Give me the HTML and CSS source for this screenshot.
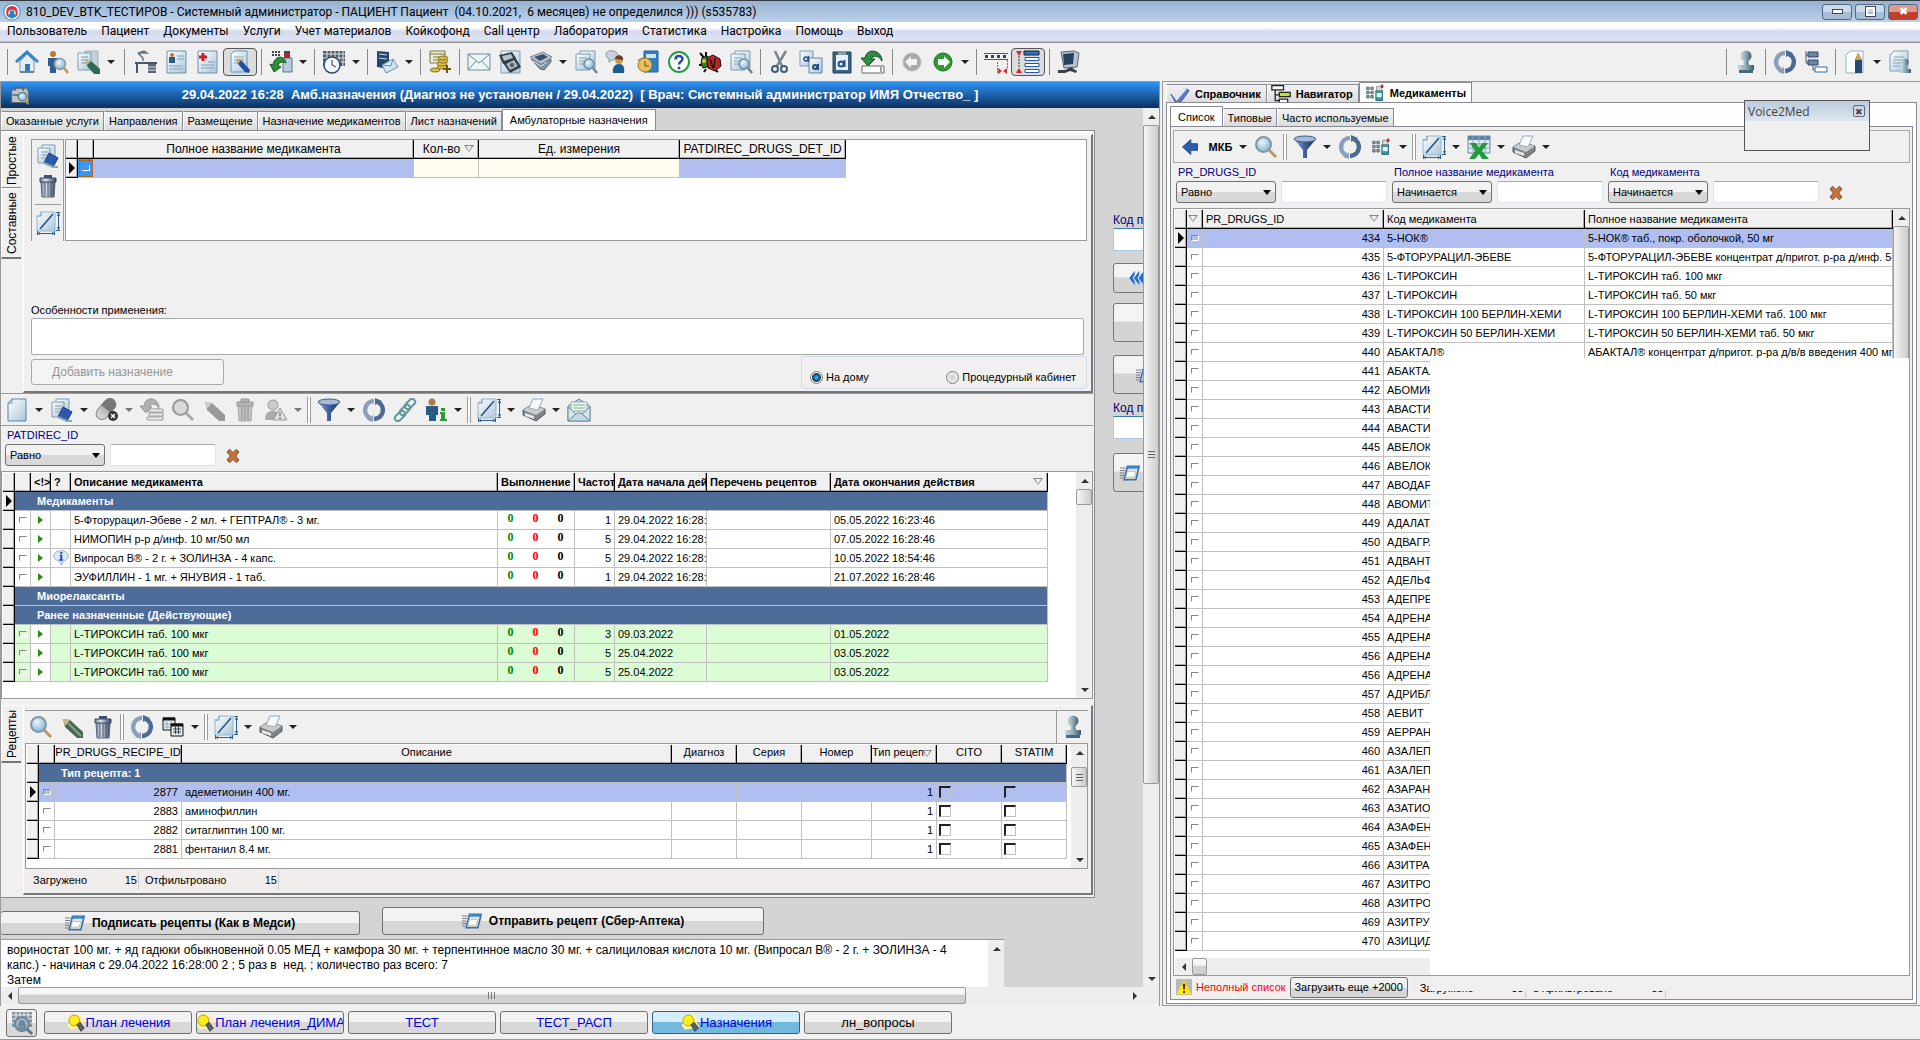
FILE: index.html
```html
<!DOCTYPE html>
<html lang="ru">
<head>
<meta charset="utf-8">
<title>810_DEV_BTK_ТЕСТИРОВ</title>
<link rel="stylesheet" href="styles.css">
</head>
<body>
<svg class="sprite" aria-hidden="true">
<defs>
<linearGradient id="gp" x1="0" y1="0" x2="1" y2="1"><stop offset="0" stop-color="#fff"/><stop offset="1" stop-color="#a9c6da"/></linearGradient>
<linearGradient id="gb" x1="0" y1="0" x2="1" y2="0"><stop offset="0" stop-color="#8fa9cf"/><stop offset=".5" stop-color="#3c5f9c"/><stop offset="1" stop-color="#1c2f5c"/></linearGradient>
<linearGradient id="gs" x1="0" y1="0" x2="1" y2="0"><stop offset="0" stop-color="#c9d8e0"/><stop offset=".5" stop-color="#8fa8b6"/><stop offset="1" stop-color="#3c5a6c"/></linearGradient>
<linearGradient id="gg" x1="0" y1="0" x2="1" y2="0"><stop offset="0" stop-color="#ddd"/><stop offset="1" stop-color="#8c8c8c"/></linearGradient>
<linearGradient id="gt" x1="0" y1="0" x2="1" y2="0"><stop offset="0" stop-color="#6d7a92"/><stop offset=".35" stop-color="#dfe5ee"/><stop offset="1" stop-color="#38455c"/></linearGradient>
<radialGradient id="gm" cx=".4" cy=".35" r=".7"><stop offset="0" stop-color="#eaf6fd"/><stop offset="1" stop-color="#7fb0d0"/></radialGradient>
<symbol id="page" viewBox="0 0 24 24"><path d="M7 1H21V23H3V5Z" fill="url(#gp)" stroke="#5d87a6"/><path d="M7 1V5H3Z" fill="#fff" stroke="#5d87a6"/></symbol>
<symbol id="home" viewBox="0 0 24 24"><path d="M5 11V22H19V11L12 4Z" fill="#e6eef5" stroke="#7d93a8"/><path d="M1 12L12 2L23 12" fill="none" stroke="#2f86c8" stroke-width="3"/><path d="M10 14h5v8h-5z" fill="#2f78b4"/><path d="M5 22h14" stroke="#6a7f92" stroke-width="2"/></symbol>
<symbol id="personmag" viewBox="0 0 24 24"><circle cx="7" cy="4" r="3" fill="#b87a3c"/><path d="M2 8h10v8h-2v7H4v-7H2z" fill="#2c5f90"/><circle cx="14" cy="14" r="5.500" fill="url(#gm)" stroke="#8b9aa6" stroke-width="1.500"/><path d="M18 18l4 5" stroke="#c8964a" stroke-width="2.500"/></symbol>
<symbol id="mag" viewBox="0 0 24 24"><circle cx="9.500" cy="9.500" r="7.500" fill="url(#gm)" stroke="#8197a5" stroke-width="2"/><path d="M15 15l7 7" stroke="#b99a62" stroke-width="3"/></symbol>
<symbol id="maggray" viewBox="0 0 24 24"><circle cx="9.500" cy="9.500" r="7.500" fill="#d8d8d8" stroke="#999" stroke-width="2"/><path d="M15 15l7 7" stroke="#aaa" stroke-width="3"/></symbol>
<symbol id="docpencil" viewBox="0 0 24 24"><path d="M8 1H21V17H8Z" fill="#c3d0d9" stroke="#9fb0bd"/><path d="M1 3H14V20H1Z" fill="url(#gp)" stroke="#7d9db3"/><path d="M4 7h7M4 10h7M4 13h6" stroke="#7d9db3"/><path d="M9 10l5 1 9 8v5h-6l-7-8z" fill="#2f6b52"/><path d="M9 10l5 1-4 4z" fill="#e2b98a"/></symbol>
<symbol id="notepencil" viewBox="0 0 24 24"><path d="M6 1H19V22H3V4Z" fill="url(#gp)" stroke="#5d9cc4"/><path d="M6 7h10M6 10h10M6 13h7" stroke="#8aa"/><path d="M9 9l4 1 9 10-1 3-4-1-7-8z" fill="#244e9a"/><path d="M9 9l4 1-3 4z" fill="#e0a35a"/></symbol>
<symbol id="desk" viewBox="0 0 24 24"><path d="M1 12h22v2H1zM2 14h2v9H2z" fill="#4a5563"/><path d="M14 14h8v9h-8z" fill="#5b6673"/><path d="M14 17h8M14 20h8" stroke="#dde"/><path d="M9 11V8L4 3M4 3l6-2 3 2z" stroke="#667684" stroke-width="1.500" fill="#cdd7de"/></symbol>
<symbol id="docperson" viewBox="0 0 24 24"><path d="M2 1H21V23H2Z" fill="url(#gp)" stroke="#6d93ab"/><circle cx="7" cy="5" r="2" fill="#b4783e"/><path d="M4 7h6v6H4z" fill="#2b5c8c"/><path d="M12 6h7M12 9h7M4 16h14M4 19h14" stroke="#86a2b5"/></symbol>
<symbol id="doccross" viewBox="0 0 24 24"><path d="M2 1H21V23H2Z" fill="url(#gp)" stroke="#6d93ab"/><path d="M7 3v8M3 7h8" stroke="#c8202c" stroke-width="3"/><path d="M12 12h7M5 15h14M5 18h14" stroke="#86a2b5"/></symbol>
<symbol id="flask" viewBox="0 0 24 24"><path d="M14 8h9v14h-9z" fill="#b9cbd6" stroke="#54788e"/><path d="M15 3h6v5h-6z" fill="#b52530"/><path d="M15 1h6v2h-6z" fill="#445"/><path d="M3 2h8M3 5h8" stroke="#445" stroke-width="2" stroke-dasharray="2 1"/><path d="M1 14l4 8 7-5-3-1c1-4 4-5 8-3-2-9-12-7-13 2z" fill="#2e8c3a" stroke="#175522"/></symbol>
<symbol id="clockcal" viewBox="0 0 24 24"><path d="M1 1h22v15H1z" fill="#515a68"/><path d="M1 4h22M1 8h22M1 12h22M5 1v15M9 1v15M13 1v15M17 1v15M21 1v15" stroke="#dfe5ea"/><circle cx="10" cy="15" r="8" fill="#f3f7fb" stroke="#2c4a70" stroke-width="1.500"/><path d="M10 10v5l4 2" fill="none" stroke="#333"/></symbol>
<symbol id="bookmail" viewBox="0 0 24 24"><path d="M2 1l12 1v17L2 17z" fill="#24466e"/><path d="M4 4l8 1M4 8l8 1" stroke="#cfe0ee"/><path d="M7 15l11-6 5 8-12 6z" fill="#d5e5ef" stroke="#6d93ab"/><path d="M7 15l9 1 2-7" fill="none" stroke="#6d93ab"/></symbol>
<symbol id="coins" viewBox="0 0 24 24"><path d="M2 1h15v12H2z" fill="#e8edda" stroke="#7e7a40"/><path d="M2 4h15M5 7h10M5 10h10" stroke="#7e7a40"/><g fill="#d7bd4a" stroke="#8b7422"><ellipse cx="14" cy="17" rx="5" ry="2"/><ellipse cx="14" cy="14" rx="5" ry="2"/><ellipse cx="15" cy="11" rx="5" ry="2"/><ellipse cx="15" cy="8" rx="5" ry="2"/><ellipse cx="7" cy="20" rx="5" ry="2"/></g><path d="M19 15v8M15 19h8" stroke="#6b5712" stroke-width="2"/></symbol>
<symbol id="mail" viewBox="0 0 24 24"><path d="M1 4H23V20H1Z" fill="#edf5f8" stroke="#6b8c9e"/><path d="M1 4l11 9 11-9M1 20l8-9M23 20l-8-9" fill="none" stroke="#6b8c9e"/></symbol>
<symbol id="photo" viewBox="0 0 24 24"><path d="M3 1h19v22H3z" fill="url(#gp)" stroke="#7d9db3"/><path d="M1 5l13-3 4 6-13 6z" fill="#343b44"/><path d="M4 6l9-2 2 4-9 3z" fill="#b8c4cc"/><path d="M5 13l12-6 6 10-11 6z" fill="#343b44"/><path d="M8 14l8-4 4 6-8 4z" fill="#a9b6c0"/><circle cx="14" cy="15" r="2" fill="#555"/></symbol>
<symbol id="scanner" viewBox="0 0 24 24"><path d="M1 7l13-5 9 5-11 7z" fill="#b8c6d0" stroke="#7c8c98"/><path d="M5 7l9-3 5 3-8 4z" fill="#3b556f"/><path d="M2 9l10 6 10-6v3l-7 8-4-1z" fill="#8394a1" stroke="#5b6974"/><path d="M4 11l8 5 6-4" fill="none" stroke="#dfe6ea"/></symbol>
<symbol id="docmag" viewBox="0 0 24 24"><path d="M6 1H21V18H6Z" fill="url(#gp)" stroke="#7d9db3"/><path d="M2 4H16V20H2Z" fill="url(#gp)" stroke="#7d9db3"/><path d="M5 8h8M5 11h6M5 14h5" stroke="#86a2b5"/><circle cx="15" cy="14" r="5" fill="url(#gm)" stroke="#6f8fa3" stroke-width="1.500"/><path d="M19 18l4 5" stroke="#6f8290" stroke-width="2.500"/></symbol>
<symbol id="speech" viewBox="0 0 24 24"><path d="M1 4c0-5 13-4 12 2 0 3-4 4-6 4l-3 2v-3C2 8 1 6 1 4z" fill="#c8d3db" stroke="#8497a5"/><circle cx="14" cy="10" r="4" fill="#d29a4b"/><path d="M10 9c0-5 9-5 8 1z" fill="#654321"/><path d="M8 23c-1-6 2-9 6-9s6 3 5 9z" fill="#1f5a8e"/></symbol>
<symbol id="docclock" viewBox="0 0 24 24"><path d="M8 1H22V22H8Z" fill="#2f7fc4" stroke="#245f95"/><path d="M10 4h10v4H10z" fill="#cfe3f2"/><path d="M1 10l7-3v5z" fill="#7a8a96"/><circle cx="9" cy="15" r="7" fill="#e9c05c" stroke="#9c7623"/><path d="M9 11v5h4" stroke="#6b4d10" fill="none"/></symbol>
<symbol id="help" viewBox="0 0 24 24"><circle cx="12" cy="12" r="10" fill="#fff" stroke="#2a9a4a" stroke-width="2"/><path d="M8.500 9.500c0-5 7-4.500 7-.5 0 2.500-3.500 2.500-3.500 5.500" fill="none" stroke="#2349b4" stroke-width="2.500"/><circle cx="12" cy="18" r="1.500" fill="#2349b4"/></symbol>
<symbol id="bug" viewBox="0 0 24 24"><path d="M2 3l5 6M8 2v6M1 15h5M8 19l-2 3M22 12l-4 2M17 20l3 2" stroke="#111" stroke-width="2"/><path d="M4 8l5-2 4 3-1 7-7 2-2-4z" fill="#2f7d31" stroke="#111"/><path d="M9 8l6-3 7 4 1 7-6 5-7-3z" fill="#c22323" stroke="#111"/><path d="M12 9l3 9M17 8l-1 10" stroke="#1b1b1b" stroke-width="1.500"/><circle cx="6" cy="11" r="2" fill="#e9c22d"/></symbol>
<symbol id="scissors" viewBox="0 0 24 24"><path d="M7 1l7 15M18 1L9 16" stroke="#7c858c" stroke-width="2.500"/><circle cx="7" cy="19" r="3" fill="#eef" stroke="#3f5d7c" stroke-width="2"/><circle cx="16" cy="19" r="3" fill="#eef" stroke="#3f5d7c" stroke-width="2"/></symbol>
<symbol id="copy" viewBox="0 0 24 24"><path d="M1 1h13v15H1z" fill="url(#gp)" stroke="#7d9db3"/><path d="M10 8h13v15H10z" fill="url(#gp)" stroke="#5e86a4"/><circle cx="7" cy="9" r="2" fill="none" stroke="#24508c" stroke-width="1.500"/><path d="M9.500 6v6" stroke="#24508c" stroke-width="1.500"/><circle cx="16" cy="17" r="2" fill="none" stroke="#24508c" stroke-width="2"/><path d="M19 14v6" stroke="#24508c" stroke-width="2"/></symbol>
<symbol id="clip" viewBox="0 0 24 24"><path d="M3 2h18v21H3z" fill="#3c6186" stroke="#27425f"/><path d="M6 5h12v15H6z" fill="#e6f0f6"/><path d="M8 1h8v4H8z" fill="#8d99a3"/><circle cx="11" cy="14" r="2.500" fill="none" stroke="#24508c" stroke-width="2"/><path d="M14.500 10v7" stroke="#24508c" stroke-width="2"/></symbol>
<symbol id="undo" viewBox="0 0 24 24"><path d="M0 8l7 8 7-7h-4c2-4 8-4 11 2 0-11-15-14-17-3z" fill="#2f8a46" stroke="#164d24"/><path d="M1 16h22v7H1z" fill="#fff" stroke="#666"/><path d="M20 17v5" stroke="#444"/></symbol>
<symbol id="back" viewBox="0 0 24 24"><circle cx="12" cy="12" r="9" fill="#aaa" stroke="#bbb"/><path d="M5 12l6-6v3h6v6h-6v3z" fill="#f2f2f2"/></symbol>
<symbol id="fwd" viewBox="0 0 24 24"><circle cx="12" cy="12" r="9" fill="#2c9c2f" stroke="#187020"/><path d="M19 12l-6-6v3H7v6h6v3z" fill="#fff"/></symbol>
<symbol id="ruler" viewBox="0 0 24 24"><path d="M0 3.500h24M0 9.500h24" stroke="#557"/><path d="M1 6.500h22" stroke="#345" stroke-width="3" stroke-dasharray="3 3"/><path d="M13.500 12v11M23.500 10v9" stroke="#777" stroke-dasharray="2 1"/><path d="M14 18l4 3-4 3zM23 18l-4 3 4 3z" fill="#c33"/></symbol>
<symbol id="lines" viewBox="0 0 24 24"><path d="M0 1h6L3 6zM0 23h6l-3-5z" fill="#d22"/><path d="M3 6v12" stroke="#333" stroke-dasharray="2 1"/><path d="M8 1h15v4H8z" fill="#2c74c8" stroke="#123"/><path d="M9 7.500h14v3H9zM9 13.500h14v3H9zM9 19.500h14v3H9z" fill="#fff" stroke="#2458a0"/></symbol>
<symbol id="monitor" viewBox="0 0 24 24"><path d="M4 2l13-1 5 2-2 14-13 1z" fill="#b9c3cb" stroke="#59636b"/><path d="M6 4l11-1-1 11-9 1z" fill="#24415f"/><path d="M1 20h7l6-3 6 4-1 2-6-2-5 2H1z" fill="#3b4248"/></symbol>
<symbol id="stamp" viewBox="0 0 24 24"><circle cx="12" cy="6" r="5.500" fill="url(#gs)"/><path d="M10 10h4l1 6H9z" fill="url(#gs)"/><path d="M4 15h16v5H4z" fill="url(#gs)"/><path d="M5 20h14v3H5z" fill="#4a6878"/></symbol>
<symbol id="refresh" viewBox="0 0 24 24"><path d="M12 3a9 9 0 0 0-4 17" fill="none" stroke="#8a9fba" stroke-width="4.500"/><path d="M12 21a9 9 0 0 0 4-17" fill="none" stroke="#4c6a92" stroke-width="4.500"/><path d="M11 17v7l-6-2z" fill="#8a9fba"/><path d="M13 7V0l7 3z" fill="#4c6a92"/></symbol>
<symbol id="tree" viewBox="0 0 24 24"><path d="M2 1v12h7v7h5M2 5h3" fill="none" stroke="#456"/><path d="M4 2h10v5H4zM4 10h10v5H4z" fill="#6e85a8" stroke="#34496b"/><path d="M11 17h12v5H11z" fill="#fff" stroke="#2b6ca8"/></symbol>
<symbol id="docpen" viewBox="0 0 24 24"><path d="M7 1H20V23H3V5Z" fill="#fff" stroke="#8fb3cc"/><path d="M12 10l3-7 4 7v13h-7z" fill="#264a72"/><path d="M12 10l3-7 4 7z" fill="#d8a23e"/></symbol>
<symbol id="docstamp" viewBox="0 0 24 24"><path d="M6 1H20V21H2V5Z" fill="url(#gp)" stroke="#7d9db3"/><path d="M6 7h10M5 10h10M5 13h8M5 16h8" stroke="#8aa6b6"/><circle cx="17" cy="12" r="3.500" fill="url(#gs)"/><path d="M15 15h4v4h4v4H12v-4h3z" fill="url(#gs)"/></symbol>
<symbol id="book" viewBox="0 0 24 24"><path d="M6 1H19V17H6Z" fill="url(#gp)" stroke="#7d9db3"/><path d="M2 4H14V19H2Z" fill="url(#gp)" stroke="#7d9db3"/><path d="M5 8h7M5 11h7M5 14h5" stroke="#86a2b5"/><path d="M13 9l9 5-5 9-9-4z" fill="#2d58b0" stroke="#1c3a7c"/><path d="M8 19l9 4h5" fill="none" stroke="#8aa" stroke-width="2"/></symbol>
<symbol id="trash" viewBox="0 0 24 24"><path d="M5 8h14l-1 15H6z" fill="url(#gt)" stroke="#56637a"/><path d="M9 9v13M12 9v13M15 9v13" stroke="#4b5870"/><path d="M4 4h16v4H4z" fill="url(#gt)" stroke="#3a4864"/><path d="M8 1h8v3H8z" fill="#3e4f70"/></symbol>
<symbol id="trashgray" viewBox="0 0 24 24"><path d="M5 8h14l-1 15H6z" fill="#c4c4c4" stroke="#aaa"/><path d="M9 9v13M12 9v13M15 9v13" stroke="#8f8f8f"/><path d="M4 4h16v4H4zM8 1h8v3H8z" fill="#b5b5b5" stroke="#999"/></symbol>
<symbol id="measure" viewBox="0 0 24 24"><path d="M5 1H19V20H1V5Z" fill="url(#gp)" stroke="#8fb8d2"/><path d="M1 5h4V1" fill="#fff" stroke="#5d87a6"/><path d="M4 18L17 3" stroke="#24507f" stroke-width="1.500"/><path d="M22.500 2v17M2 22.500h16M20 1.500h4M20 19.500h4M1.500 20v4M18.500 20v4" stroke="#2d5f94"/><path d="M22.500 1l-1.500 4h3zM22.500 20l-1.500-4h3zM1 22.500l3-1.500v3zM19 22.500l-3-1.500v3z" fill="#2d5f94"/></symbol>
<symbol id="pill" viewBox="0 0 24 24"><g transform="rotate(-50 11 11)"><rect x="-1" y="5" width="24" height="12" rx="6" fill="url(#gg)" stroke="#888"/><path d="M11 5h6a6 6 0 0 1 0 12h-6z" fill="#777"/></g><circle cx="18" cy="18" r="5" fill="#333"/><path d="M16 16l4 4M20 16l-4 4" stroke="#fff" stroke-width="1.500"/></symbol>
<symbol id="undolist" viewBox="0 0 24 24"><path d="M0 8l6 7 6-6H9c2-4 8-4 10 2C20-1 5-3 4 8z" fill="#b0b0b0" stroke="#999"/><path d="M9 11h14v3H9zM9 15h14v3H9zM7 19h16v3H7z" fill="#eee" stroke="#999"/></symbol>
<symbol id="pencilgray" viewBox="0 0 24 24"><path d="M3 4l7 1 13 12v6h-6L5 12z" fill="#999"/><path d="M3 4l7 1-5 6z" fill="#ccc"/></symbol>
<symbol id="pencil" viewBox="0 0 24 24"><path d="M3 4l7 1 13 12v6h-6L5 12z" fill="#466a50"/><path d="M8 8l13 13" stroke="#85a58c" stroke-width="2"/><path d="M3 4l7 1-5 6z" fill="#d9b48a"/></symbol>
<symbol id="persongray" viewBox="0 0 24 24"><circle cx="9" cy="7" r="5" fill="#ccc" stroke="#999"/><path d="M1 22c0-7 3-9 8-9s8 2 8 9z" fill="#aaa"/><path d="M16 10l7 12H9z" fill="#ddd" stroke="#999"/><path d="M16 14v4M16 19v2" stroke="#888" stroke-width="1.500"/></symbol>
<symbol id="funnel" viewBox="0 0 24 24"><path d="M1 4l9 11v8h4v-8L23 4z" fill="url(#gb)"/><ellipse cx="12" cy="4" rx="11" ry="3" fill="#a6bbd9" stroke="#3d5b8f"/></symbol>
<symbol id="chain" viewBox="0 0 24 24"><g fill="none" stroke="#5f9a9c" stroke-width="2"><rect x="11" y="3" width="12" height="6" rx="3" transform="rotate(-45 17 6)"/><rect x="6" y="9" width="12" height="6" rx="3" transform="rotate(-45 12 12)"/><rect x="1" y="15" width="12" height="6" rx="3" transform="rotate(-45 7 18)"/></g></symbol>
<symbol id="maninfo" viewBox="0 0 24 24"><circle cx="8" cy="4" r="3.500" fill="#b07a46"/><path d="M2 8h12v9h-2v6H5v-6H2z" fill="#265a88"/><path d="M17 10h4v3h-4zM16 14h5v7h2v2h-7v-2h1v-5h-1z" fill="#2d9a33"/></symbol>
<symbol id="printer" viewBox="0 0 24 24"><path d="M1 12l8-5 14 4v5l-9 7L1 17z" fill="#7f8488" stroke="#55595c"/><path d="M1 12l8-5 14 4-9 6z" fill="#c7cbce"/><path d="M7 10l4-9h10l-5 11z" fill="#f6f9fb" stroke="#9ab"/><path d="M3 15l9 3v3l-9-3z" fill="#e5e7e8"/></symbol>
<symbol id="openmail" viewBox="0 0 24 24"><path d="M1 8l11-7 11 7v15H1z" fill="#b4d0da" stroke="#6b8c9e"/><path d="M4 4h16v12H4z" fill="#f1f8ec" stroke="#9ab"/><path d="M6 7h12M6 10h12M6 13h12" stroke="#7a9"/><path d="M1 9l8 7-8 7zM23 9l-8 7 8 7z" fill="#d4e5ec" stroke="#6b8c9e"/><path d="M1 23l9-8h4l9 8z" fill="#c3dae3" stroke="#6b8c9e"/></symbol>
<symbol id="grids" viewBox="0 0 24 24"><path d="M2 3h12v12H2z" fill="#e3efe6" stroke="#111"/><path d="M2 4h12" stroke="#111" stroke-width="3"/><path d="M2 9h12M2 12h12M6 5v10M10 5v10" stroke="#9ab"/><path d="M10 9h12v12H10z" fill="#e3efe6" stroke="#111"/><path d="M10 10h12" stroke="#111" stroke-width="3"/><path d="M12 14h8M12 17h8M14.500 12v7M17.500 12v7" stroke="#345"/></symbol>
<symbol id="arrow" viewBox="0 0 24 24"><path d="M3 12l10-9v5h8v8h-8v5z" fill="#2f5dae" stroke="#1b3f80"/></symbol>
<symbol id="drugs" viewBox="0 0 24 24"><path d="M2 5h3v3H2zM7 5h3v3H7zM2 10h3v3H2zM7 10h3v3H7zM2 15h3v3H2zM7 15h3v3H7z" fill="#8ea0ac" stroke="#56656f"/><path d="M13 9h8v12h-8z" fill="#2d9ca6" stroke="#1c6169"/><path d="M14 12h6v5h-6z" fill="#e8f4f5"/><path d="M14 4h6v5h-6z" fill="#d9dfe2" stroke="#788"/><path d="M19 2h3v4h-3z" fill="#c22"/></symbol>
<symbol id="excel" viewBox="0 0 24 24"><path d="M1 1h22v17H1z" fill="#dfe9ee" stroke="#6a8ba0"/><path d="M1 1h22v4H1z" fill="#5c84a8"/><path d="M1 9h22M1 13h22M6 1v17M12 1v17M18 1v17" stroke="#8aa6b6"/><path d="M3 8h6l3 5 3-5h6l-6 8 7 8h-7l-3-5-4 5H2l6-8z" fill="#219a3c"/></symbol>
<symbol id="cross" viewBox="0 0 24 24"><path d="M3 6l4-4 5 5 5-5 4 4-5 6 5 6-4 4-5-5-5 5-4-4 5-6z" fill="#c8733c" stroke="#7e4a2c" stroke-width="1.500"/></symbol>
<symbol id="bulb" viewBox="0 0 24 24"><path d="M11 0l2 4 5-3 1 5 4 2-3 4 3 4-5 2-12 2-4-5 2-4-3-4 6-1 1-4z" fill="#fbf3a8"/><circle cx="10" cy="9" r="6.500" fill="#ffee1c" stroke="#b58a10"/><path d="M13 14l4-3 5 7-4 4z" fill="#56606e" stroke="#333"/></symbol>
<symbol id="win" viewBox="0 0 24 24"><path d="M9 4h14l-4 16H5z" fill="#f4e9cf" stroke="#3b6fae" stroke-width="2"/><path d="M9 4h14l-1 3H8z" fill="#3a86d8"/><path d="M9 10h10l-2 7H7z" fill="#fff" stroke="#a9b4bf"/><path d="M0 6h7M0 9h6M0 12h5M0 15h5M0 18h4" stroke="#667"/></symbol>
<symbol id="case" viewBox="0 0 24 24"><path d="M2 7l4-3h14l2 3v14H2z" fill="#b9c4ca" stroke="#56656f"/><path d="M6 7V3h10v4M3 12h8" fill="none" stroke="#56656f" stroke-width="2"/><circle cx="15" cy="14" r="5" fill="url(#gm)" stroke="#5b7386" stroke-width="1.500"/><path d="M18 18l4 5" stroke="#c69040" stroke-width="2.500"/></symbol>
<symbol id="logo" viewBox="0 0 24 24"><circle cx="12" cy="12" r="11" fill="#fff" stroke="#6aa3cf" stroke-width="2"/><path d="M5 17C3 9 6 4 12 4s9 5 7 13l-3 1c2-6 1-9-4-9s-6 3-4 9z" fill="#d8323c"/><path d="M9 10h6v4l3 4-6 3-6-3 3-4z" fill="#2f80be"/></symbol>
<symbol id="check" viewBox="0 0 24 24"><path d="M1 12l7 7L19 5l4 3-11 15H7z" fill="#5d78c4" stroke="#344d90"/><path d="M1 11l6 5 8-11h6L8 20z" fill="#e3e9f8"/></symbol>
<symbol id="nav" viewBox="0 0 24 24"><path d="M1 2h14v5H1z" fill="#fff" stroke="#222" stroke-width="1.500"/><path d="M5 7v13h5M5 13h5" fill="none" stroke="#222" stroke-width="1.500"/><path d="M10 10h13v5H10z" fill="#b4e62e" stroke="#222" stroke-width="1.500"/><path d="M10 18h10v5H10z" fill="#fff" stroke="#222" stroke-width="1.500"/></symbol>
<symbol id="info" viewBox="0 0 24 24"><path d="M12 1c7 0 11 4 11 8s-3 7-8 8l-2 6-3-6c-5-1-9-4-9-8s4-8 11-8z" fill="#dbe8f5" stroke="#6f95bd"/><path d="M11 3h3v3h-3zM10 7h4v7h1v2h-6v-2h2V9h-1z" fill="#1f4fae"/></symbol>
<symbol id="warn" viewBox="0 0 24 24"><path d="M0 0h24v24H0z" fill="#b9b9b9"/><path d="M12 1l11 22H1z" fill="#ffee00"/><path d="M10 7h4l-1 9h-2zM10.500 18h3v3h-3z" fill="#7b1010"/></symbol>
<symbol id="rewind" viewBox="0 0 24 24"><path d="M10 1L2 12l8 11V17l-3-5 3-5zM17 1L9 12l8 11V17l-3-5 3-5zM24 1l-8 11 8 11z" fill="#1f6fd6"/></symbol>
<symbol id="sheetmag" viewBox="0 0 24 24"><path d="M2 1h20v15H2z" fill="#8793a0"/><path d="M2 4h20M2 8h20M2 12h20M6 1v15M10 1v15M14 1v15M18 1v15" stroke="#e8ecef"/><circle cx="12" cy="13" r="7" fill="#9fb2c2" stroke="#6f8596" stroke-width="2"/><path d="M9 13h6v5H9zM10 13v-3h4v3" fill="#7890a3" stroke="#667e92"/><path d="M17 18l5 5" stroke="#667684" stroke-width="3"/></symbol>
</defs>
</svg>

<header class="title">
<svg class="ic s16"><use href="#logo"/></svg>
<span>810_DEV_BTK_ТЕСТИРОВ - Системный администратор - ПАЦИЕНТ Пациент&nbsp; (04.10.2021,&nbsp; 6 месяцев) не определился ))) (s535783)</span>
<div class="winbtns"><button aria-label="Свернуть"><i class="min"></i></button><button aria-label="Восстановить"><i class="max"></i></button><button class="close" aria-label="Закрыть">✖</button></div>
</header>
<nav class="menu"><a href="#">Пользователь</a><a href="#">Пациент</a><a href="#">Документы</a><a href="#">Услуги</a><a href="#">Учет материалов</a><a href="#">Койкофонд</a><a href="#">Call центр</a><a href="#">Лаборатория</a><a href="#">Статистика</a><a href="#">Настройка</a><a href="#">Помощь</a><a href="#">Выход</a></nav>

<div class="bar main-bar">
<i class="sep"></i>
<button aria-label="Домой"><svg class="ic"><use href="#home"/></svg></button>
<button aria-label="Поиск пациента"><svg class="ic"><use href="#personmag"/></svg></button>
<button aria-label="Запись"><svg class="ic"><use href="#docpencil"/></svg></button><b class="car"></b>
<i class="sep wide"></i>
<button aria-label="Рабочий стол"><svg class="ic"><use href="#desk"/></svg></button>
<button aria-label="Карта"><svg class="ic"><use href="#docperson"/></svg></button>
<button aria-label="Медкарта"><svg class="ic"><use href="#doccross"/></svg></button>
<button class="on" aria-label="Редактор"><svg class="ic"><use href="#notepencil"/></svg></button>
<i class="sep"></i>
<button aria-label="Препараты"><svg class="ic"><use href="#flask"/></svg></button><b class="car"></b>
<i class="sep"></i>
<button aria-label="Расписание"><svg class="ic"><use href="#clockcal"/></svg></button><b class="car"></b>
<i class="sep"></i>
<button aria-label="Направления"><svg class="ic"><use href="#bookmail"/></svg></button><b class="car"></b>
<i class="sep"></i>
<button aria-label="Оплата"><svg class="ic"><use href="#coins"/></svg></button>
<i class="sep"></i>
<button aria-label="Почта"><svg class="ic"><use href="#mail"/></svg></button>
<button aria-label="Снимки"><svg class="ic"><use href="#photo"/></svg></button>
<button aria-label="Сканер"><svg class="ic"><use href="#scanner"/></svg></button><b class="car"></b>
<button aria-label="Просмотр"><svg class="ic"><use href="#docmag"/></svg></button>
<button aria-label="Сообщения"><svg class="ic"><use href="#speech"/></svg></button>
<button aria-label="Журнал"><svg class="ic"><use href="#docclock"/></svg></button>
<button aria-label="Справка"><svg class="ic"><use href="#help"/></svg></button>
<button aria-label="Отладка"><svg class="ic"><use href="#bug"/></svg></button>
<button aria-label="Поиск"><svg class="ic"><use href="#docmag"/></svg></button>
<i class="sep"></i>
<button aria-label="Вырезать"><svg class="ic"><use href="#scissors"/></svg></button>
<button aria-label="Копировать"><svg class="ic"><use href="#copy"/></svg></button>
<button aria-label="Вставить"><svg class="ic"><use href="#clip"/></svg></button>
<button aria-label="Отменить"><svg class="ic"><use href="#undo"/></svg></button>
<i class="sep"></i>
<button aria-label="Назад"><svg class="ic"><use href="#back"/></svg></button>
<button aria-label="Вперёд"><svg class="ic"><use href="#fwd"/></svg></button><b class="car"></b>
<i class="sep"></i>
<button aria-label="Ширина"><svg class="ic"><use href="#ruler"/></svg></button>
<button class="on" aria-label="Высота"><svg class="ic"><use href="#lines"/></svg></button>
<i class="sep"></i>
<button aria-label="Система"><svg class="ic"><use href="#monitor"/></svg></button>
<span class="grow"></span>
<i class="sep"></i>
<button aria-label="Подпись"><svg class="ic"><use href="#stamp"/></svg></button>
<i class="sep"></i>
<button aria-label="Обновить"><svg class="ic"><use href="#refresh"/></svg></button>
<button aria-label="Дерево"><svg class="ic"><use href="#tree"/></svg></button>
<i class="sep"></i>
<button aria-label="Правка"><svg class="ic"><use href="#docpen"/></svg></button><b class="car"></b>
<button aria-label="Печать"><svg class="ic"><use href="#docstamp"/></svg></button>
</div>

<main class="work">
<section class="left">
<h1 class="cap"><svg class="ic s20"><use href="#case"/></svg><span>29.04.2022 16:28&nbsp; Амб.назначения (Диагноз не установлен / 29.04.2022)&nbsp; [ Врач: Системный администратор ИМЯ Отчество_ ]</span></h1>
<div class="scroll">
<div class="view">
<div class="tabs ltabs"><button>Оказанные услуги</button><button>Направления</button><button>Размещение</button><button>Назначение медикаментов</button><button>Лист назначений</button><button class="act">Амбулаторные назначения</button></div>
<div class="cols">
<div class="page">

<div class="vgroup g1">
<div class="vtabs"><button class="vt a">Простые</button><button class="vt b">Составные</button></div>
<div class="vpanel">
<div class="drugs">
<div class="vbar"><button aria-label="Справочник"><svg class="ic"><use href="#book"/></svg></button><button aria-label="Удалить"><svg class="ic"><use href="#trash"/></svg></button><hr><button aria-label="Размер"><svg class="ic"><use href="#measure"/></svg></button></div>
<div class="gridbox">
<table class="grid t1"><colgroup><col class="w12"><col class="w16"><col class="w320"><col class="w65"><col class="w201"><col class="w166"></colgroup>
<tr><th><th><th>Полное название медикамента<th class="sort">Кол-во<i class="flt"></i><th>Ед. измерения<th>PATDIREC_DRUGS_DET_ID
<tr><td class="ind cur"><td class="foc"><input type="checkbox" class="mk" aria-label="Строка"><td class="sel"><td class="crm"><td class="crm"><td class="sel">
</table></div>
</div>
<label class="lab" for="osob">Особенности применения:</label>
<textarea id="osob" class="memo"></textarea>
<div class="addrow"><button class="add" disabled>Добавить назначение</button>
<fieldset><label><input type="radio" name="place" checked>На дому</label><label><input type="radio" name="place">Процедурный кабинет</label></fieldset></div>
</div>
</div>

<div class="bar bx">
<button aria-label="Новый"><svg class="ic"><use href="#page"/></svg></button><b class="car"></b>
<button aria-label="Справочник"><svg class="ic"><use href="#book"/></svg></button><b class="car"></b>
<button aria-label="Отменить препарат"><svg class="ic"><use href="#pill"/></svg></button><b class="car off"></b>
<button aria-label="Вернуть"><svg class="ic"><use href="#undolist"/></svg></button>
<button aria-label="Просмотр"><svg class="ic"><use href="#maggray"/></svg></button>
<button aria-label="Изменить"><svg class="ic"><use href="#pencilgray"/></svg></button>
<button aria-label="Удалить"><svg class="ic"><use href="#trashgray"/></svg></button>
<button aria-label="Пациент"><svg class="ic"><use href="#persongray"/></svg></button><b class="car off"></b>
<i class="dsep"></i>
<button aria-label="Фильтр"><svg class="ic"><use href="#funnel"/></svg></button><b class="car"></b>
<button aria-label="Обновить"><svg class="ic"><use href="#refresh"/></svg></button>
<button aria-label="Связь"><svg class="ic"><use href="#chain"/></svg></button>
<button aria-label="Сведения"><svg class="ic"><use href="#maninfo"/></svg></button><b class="car"></b>
<i class="dsep"></i>
<button aria-label="Размер"><svg class="ic"><use href="#measure"/></svg></button><b class="car"></b>
<button aria-label="Печать"><svg class="ic"><use href="#printer"/></svg></button><b class="car"></b>
<button aria-label="Письмо"><svg class="ic"><use href="#openmail"/></svg></button>
</div>

<div class="filter">
<div class="fc"><label for="f0">PATDIREC_ID</label><div><select id="f0"><option>Равно</select><input type="text" aria-label="PATDIREC_ID значение"></div></div>
<button class="clr" aria-label="Очистить"><svg class="ic s16"><use href="#cross"/></svg></button>
</div>

<div class="gridbox g2">
<div class="gcell">
<table class="grid t2"><colgroup><col class="w12"><col class="w16"><col class="w20"><col class="w20"><col class="w427"><col class="w77"><col class="w40"><col class="w92"><col class="w124"><col class="w217"></colgroup>
<tr><th><th><th>&lt;!&gt;<th>?<th>Описание медикамента<th>Выполнение<th>Частота<th>Дата начала действия<th>Перечень рецептов<th>Дата окончания действия<i class="flt"></i>
<tr><td class="ind cur"><td class="grp" colspan="9">Медикаменты
<tr><td class="ind"><td><input type="checkbox" class="mk" aria-label="Строка"><td class="pl"><i></i><td><td>5-Фторурацил-Эбеве - 2 мл. + ГЕПТРАЛ® - 3 мг.<td class="cnt"><b>0</b><b>0</b><b>0</b><td class="r">1<td>29.04.2022 16:28:46<td><td>05.05.2022 16:23:46
<tr><td class="ind"><td><input type="checkbox" class="mk" aria-label="Строка"><td class="pl"><i></i><td><td>НИМОПИН р-р д/инф. 10 мг/50 мл<td class="cnt"><b>0</b><b>0</b><b>0</b><td class="r">5<td>29.04.2022 16:28:46<td><td>07.05.2022 16:28:46
<tr><td class="ind"><td><input type="checkbox" class="mk" aria-label="Строка"><td class="pl"><i></i><td class="inf"><svg class="ic s16"><use href="#info"/></svg><td>Випросал В® - 2 г. + ЗОЛИНЗА - 4 капс.<td class="cnt"><b>0</b><b>0</b><b>0</b><td class="r">5<td>29.04.2022 16:28:46<td><td>10.05.2022 18:54:46
<tr><td class="ind"><td><input type="checkbox" class="mk" aria-label="Строка"><td class="pl"><i></i><td><td>ЭУФИЛЛИН - 1 мг. + ЯНУВИЯ - 1 таб.<td class="cnt"><b>0</b><b>0</b><b>0</b><td class="r">1<td>29.04.2022 16:28:46<td><td>21.07.2022 16:28:46
<tr><td class="ind"><td class="grp" colspan="9">Миорелаксанты
<tr><td class="ind"><td class="grp" colspan="9">Ранее назначенные (Действующие)
<tr class="grn"><td class="ind"><td><input type="checkbox" class="mk" aria-label="Строка"><td class="pl"><i></i><td><td>L-ТИРОКСИН таб. 100 мкг<td class="cnt"><b>0</b><b>0</b><b>0</b><td class="r">3<td>09.03.2022<td><td>01.05.2022
<tr class="grn"><td class="ind"><td><input type="checkbox" class="mk" aria-label="Строка"><td class="pl"><i></i><td><td>L-ТИРОКСИН таб. 100 мкг<td class="cnt"><b>0</b><b>0</b><b>0</b><td class="r">5<td>25.04.2022<td><td>03.05.2022
<tr class="grn"><td class="ind"><td><input type="checkbox" class="mk" aria-label="Строка"><td class="pl"><i></i><td><td>L-ТИРОКСИН таб. 100 мкг<td class="cnt"><b>0</b><b>0</b><b>0</b><td class="r">5<td>25.04.2022<td><td>03.05.2022
</table></div>
<div class="vsb"><i class="up"></i><i class="th t16"></i><i class="rest"></i><i class="dn"></i></div>
</div>

<div class="vgroup g3">
<div class="vtabs"><button class="vt c">Рецепты</button></div>
<div class="vpanel">
<div class="bar rbar">
<button aria-label="Просмотр"><svg class="ic"><use href="#mag"/></svg></button>
<button aria-label="Изменить"><svg class="ic"><use href="#pencil"/></svg></button>
<button aria-label="Удалить"><svg class="ic"><use href="#trash"/></svg></button>
<i class="dsep"></i>
<button aria-label="Обновить"><svg class="ic"><use href="#refresh"/></svg></button>
<button aria-label="Таблицы"><svg class="ic"><use href="#grids"/></svg></button><b class="car"></b>
<i class="dsep"></i>
<button aria-label="Размер"><svg class="ic"><use href="#measure"/></svg></button><b class="car"></b>
<button aria-label="Печать"><svg class="ic"><use href="#printer"/></svg></button><b class="car"></b>
<span class="grow"></span>
<button class="stampb" aria-label="Подпись"><svg class="ic"><use href="#stamp"/></svg></button>
</div>
<div class="gridbox g4">
<div class="gcell">
<table class="grid t3"><colgroup><col class="w12"><col class="w16"><col class="w127"><col class="w490"><col class="w65"><col class="w65"><col class="w69"><col class="w65"><col class="w65"><col class="w65"></colgroup>
<tr><th><th><th>PR_DRUGS_RECIPE_ID<th>Описание<th>Диагноз<th>Серия<th>Номер<th class="l"><span>Тип рецепта</span><i class="flt"></i><th>CITO<th>STATIM
<tr><td class="ind"><td class="grp" colspan="9">Тип рецепта: 1
<tr class="selrow"><td class="ind cur"><td><input type="checkbox" class="mk" aria-label="Строка"><td class="r">2877<td>адеметионин 400 мг.<td><td><td><td class="r">1<td><input type="checkbox" class="cb" aria-label="CITO"><td><input type="checkbox" class="cb" aria-label="STATIM">
<tr><td class="ind"><td><input type="checkbox" class="mk" aria-label="Строка"><td class="r">2883<td>аминофиллин<td><td><td><td class="r">1<td><input type="checkbox" class="cb" aria-label="CITO"><td><input type="checkbox" class="cb" aria-label="STATIM">
<tr><td class="ind"><td><input type="checkbox" class="mk" aria-label="Строка"><td class="r">2882<td>ситаглиптин 100 мг.<td><td><td><td class="r">1<td><input type="checkbox" class="cb" aria-label="CITO"><td><input type="checkbox" class="cb" aria-label="STATIM">
<tr><td class="ind"><td><input type="checkbox" class="mk" aria-label="Строка"><td class="r">2881<td>фентанил 8.4 мг.<td><td><td><td class="r">1<td><input type="checkbox" class="cb" aria-label="CITO"><td><input type="checkbox" class="cb" aria-label="STATIM">
</table></div>
<div class="vsb"><i class="up"></i><i class="gap6"></i><i class="th t20 grip"></i><i class="rest"></i><i class="dn"></i></div>
</div>
<div class="status"><span><em>Загружено</em><em>15</em></span><span><em>Отфильтровано</em><em>15</em></span></div>
</div>
</div>
</div>
<aside class="side">
<label for="k1">Код пациента</label><input id="k1" type="text">
<button class="x1" aria-label="Назад"><svg class="ic s16"><use href="#rewind"/></svg></button>
<button class="x2" aria-label="Действие"></button>
<button class="x3" aria-label="Форма"><svg class="ic s20"><use href="#win"/></svg></button>
<label for="k2">Код пациента</label><input id="k2" type="text">
<button class="x4" aria-label="Окно"><svg class="ic s20"><use href="#win"/></svg></button>
</aside>
</div>
<div class="acts"><button class="b1"><svg class="ic s20"><use href="#win"/></svg>Подписать рецепты (Как в Медси)</button><button class="b2"><svg class="ic s20"><use href="#win"/></svg>Отправить рецепт (Сбер-Аптека)</button></div>
<div class="note"><p>вориностат 100 мг. + яд гадюки обыкновенной 0.05 МЕД + камфора 30 мг. + терпентинное масло 30 мг. + салициловая кислота 10 мг. (Випросал В® - 2 г. + ЗОЛИНЗА - 4 капс.) - начиная с 29.04.2022 16:28:00 2 ; 5 раз в&nbsp; нед. ; количество раз всего: 7<br>Затем</p><div class="vsb"><i class="up"></i></div></div>
</div>
<div class="vsb big"><i class="up"></i><i class="th grip"></i><i class="rest"></i><i class="dn"></i></div>
</div>
<div class="hsb"><i class="lf"></i><i class="th"></i><i class="rest"></i><i class="rt"></i></div>
</section>

<section class="right">
<div class="tabs rtabs"><button><svg class="ic s20"><use href="#check"/></svg>Справочник</button><button><svg class="ic s20"><use href="#nav"/></svg>Навигатор</button><button class="act"><svg class="ic s20"><use href="#drugs"/></svg>Медикаменты</button></div>
<div class="frame">
<div class="tabs stabs"><button class="act">Список</button><button>Типовые</button><button>Часто используемые</button></div>
<div class="frame in">
<div class="bar dbar">
<button aria-label="Назад"><svg class="ic s20"><use href="#arrow"/></svg></button>
<button class="mkb">МКБ</button><b class="car"></b>
<button aria-label="Поиск"><svg class="ic"><use href="#mag"/></svg></button>
<i class="dsep"></i>
<button aria-label="Фильтр"><svg class="ic"><use href="#funnel"/></svg></button><b class="car"></b>
<button aria-label="Обновить"><svg class="ic"><use href="#refresh"/></svg></button>
<button aria-label="Препараты"><svg class="ic s20"><use href="#drugs"/></svg></button><b class="car"></b>
<i class="dsep"></i>
<button aria-label="Размер"><svg class="ic"><use href="#measure"/></svg></button><b class="car"></b>
<button aria-label="Excel"><svg class="ic"><use href="#excel"/></svg></button><b class="car"></b>
<button aria-label="Печать"><svg class="ic"><use href="#printer"/></svg></button><b class="car"></b>
</div>
<div class="filter">
<div class="fc"><label for="f1">PR_DRUGS_ID</label><div><select id="f1"><option>Равно</select><input type="text" aria-label="PR_DRUGS_ID значение"></div></div>
<div class="fc"><label for="f2">Полное название медикамента</label><div><select id="f2"><option>Начинается</select><input type="text" aria-label="Полное название значение"></div></div>
<div class="fc"><label for="f3">Код медикамента</label><div><select id="f3"><option>Начинается</select><input type="text" aria-label="Код значение"></div></div>
<button class="clr" aria-label="Очистить"><svg class="ic s16"><use href="#cross"/></svg></button>
</div>
<div class="gridbox g5">
<div class="gcell">
<table class="grid t4"><colgroup><col class="w12"><col class="w16"><col class="w181"><col class="w201"><col></colgroup>
<tr><th><th><i class="flt"></i><th>PR_DRUGS_ID<i class="flt"></i><th>Код медикамента<th>Полное название медикамента
<tr class="selrow"><td class="ind cur"><td><input type="checkbox" class="mk" aria-label="Строка"><td class="r">434<td>5-НОК®<td>5-НОК® таб., покр. оболочкой, 50 мг
<tr><td class="ind"><td><input type="checkbox" class="mk" aria-label="Строка"><td class="r">435<td>5-ФТОРУРАЦИЛ-ЭБЕВЕ<td>5-ФТОРУРАЦИЛ-ЭБЕВЕ концентрат д/пригот. р-ра д/инф. 500 мг
<tr><td class="ind"><td><input type="checkbox" class="mk" aria-label="Строка"><td class="r">436<td>L-ТИРОКСИН<td>L-ТИРОКСИН таб. 100 мкг
<tr><td class="ind"><td><input type="checkbox" class="mk" aria-label="Строка"><td class="r">437<td>L-ТИРОКСИН<td>L-ТИРОКСИН таб. 50 мкг
<tr><td class="ind"><td><input type="checkbox" class="mk" aria-label="Строка"><td class="r">438<td>L-ТИРОКСИН 100 БЕРЛИН-ХЕМИ<td>L-ТИРОКСИН 100 БЕРЛИН-ХЕМИ таб. 100 мкг
<tr><td class="ind"><td><input type="checkbox" class="mk" aria-label="Строка"><td class="r">439<td>L-ТИРОКСИН 50 БЕРЛИН-ХЕМИ<td>L-ТИРОКСИН 50 БЕРЛИН-ХЕМИ таб. 50 мкг
<tr><td class="ind"><td><input type="checkbox" class="mk" aria-label="Строка"><td class="r">440<td>АБАКТАЛ®<td>АБАКТАЛ® концентрат д/пригот. р-ра д/в/в введения 400 мг
<tr><td class="ind"><td><input type="checkbox" class="mk" aria-label="Строка"><td class="r">441<td>АБАКТАЛ<td>
<tr><td class="ind"><td><input type="checkbox" class="mk" aria-label="Строка"><td class="r">442<td>АБОМИН<td>
<tr><td class="ind"><td><input type="checkbox" class="mk" aria-label="Строка"><td class="r">443<td>АВАСТИН<td>
<tr><td class="ind"><td><input type="checkbox" class="mk" aria-label="Строка"><td class="r">444<td>АВАСТИН<td>
<tr><td class="ind"><td><input type="checkbox" class="mk" aria-label="Строка"><td class="r">445<td>АВЕЛОКС<td>
<tr><td class="ind"><td><input type="checkbox" class="mk" aria-label="Строка"><td class="r">446<td>АВЕЛОКС<td>
<tr><td class="ind"><td><input type="checkbox" class="mk" aria-label="Строка"><td class="r">447<td>АВОДАРТ<td>
<tr><td class="ind"><td><input type="checkbox" class="mk" aria-label="Строка"><td class="r">448<td>АВОМИТ<td>
<tr><td class="ind"><td><input type="checkbox" class="mk" aria-label="Строка"><td class="r">449<td>АДАЛАТ<td>
<tr><td class="ind"><td><input type="checkbox" class="mk" aria-label="Строка"><td class="r">450<td>АДВАГРАФ<td>
<tr><td class="ind"><td><input type="checkbox" class="mk" aria-label="Строка"><td class="r">451<td>АДВАНТАН<td>
<tr><td class="ind"><td><input type="checkbox" class="mk" aria-label="Строка"><td class="r">452<td>АДЕЛЬФАН<td>
<tr><td class="ind"><td><input type="checkbox" class="mk" aria-label="Строка"><td class="r">453<td>АДЕПРЕСС<td>
<tr><td class="ind"><td><input type="checkbox" class="mk" aria-label="Строка"><td class="r">454<td>АДРЕНАЛИН<td>
<tr><td class="ind"><td><input type="checkbox" class="mk" aria-label="Строка"><td class="r">455<td>АДРЕНАЛИН<td>
<tr><td class="ind"><td><input type="checkbox" class="mk" aria-label="Строка"><td class="r">456<td>АДРЕНАЛИН<td>
<tr><td class="ind"><td><input type="checkbox" class="mk" aria-label="Строка"><td class="r">456<td>АДРЕНАЛИН<td>
<tr><td class="ind"><td><input type="checkbox" class="mk" aria-label="Строка"><td class="r">457<td>АДРИБЛАСТИН<td>
<tr><td class="ind"><td><input type="checkbox" class="mk" aria-label="Строка"><td class="r">458<td>АЕВИТ<td>
<tr><td class="ind"><td><input type="checkbox" class="mk" aria-label="Строка"><td class="r">459<td>АЕРРАН<td>
<tr><td class="ind"><td><input type="checkbox" class="mk" aria-label="Строка"><td class="r">460<td>АЗАЛЕПТИН<td>
<tr><td class="ind"><td><input type="checkbox" class="mk" aria-label="Строка"><td class="r">461<td>АЗАЛЕПТИН<td>
<tr><td class="ind"><td><input type="checkbox" class="mk" aria-label="Строка"><td class="r">462<td>АЗАРАН<td>
<tr><td class="ind"><td><input type="checkbox" class="mk" aria-label="Строка"><td class="r">463<td>АЗАТИОПРИН<td>
<tr><td class="ind"><td><input type="checkbox" class="mk" aria-label="Строка"><td class="r">464<td>АЗАФЕН<td>
<tr><td class="ind"><td><input type="checkbox" class="mk" aria-label="Строка"><td class="r">465<td>АЗАФЕН<td>
<tr><td class="ind"><td><input type="checkbox" class="mk" aria-label="Строка"><td class="r">466<td>АЗИТРАЛ<td>
<tr><td class="ind"><td><input type="checkbox" class="mk" aria-label="Строка"><td class="r">467<td>АЗИТРОКС<td>
<tr><td class="ind"><td><input type="checkbox" class="mk" aria-label="Строка"><td class="r">468<td>АЗИТРОКС<td>
<tr><td class="ind"><td><input type="checkbox" class="mk" aria-label="Строка"><td class="r">469<td>АЗИТРУС<td>
<tr><td class="ind"><td><input type="checkbox" class="mk" aria-label="Строка"><td class="r">470<td>АЗИЦИД<td>
</table>
<div class="hsb"><i class="lf"></i><i class="th"></i></div>
</div>
<div class="vsb"><i class="up"></i><i class="th full"></i></div>
<div class="blank"></div>
</div>
<div class="foot"><svg class="ic s16"><use href="#warn"/></svg><span class="red">Неполный список</span><button>Загрузить еще +2000</button><div class="status"><span><em>Загружено</em><em>38</em></span><span><em>Отфильтровано</em><em>38</em></span><i class="mask"></i></div></div>
</div>
</div>
<div class="voice"><div><span>Voice2Med</span><button aria-label="Закрыть">✖</button></div></div>
</section>
</main>

<footer class="task"><button class="sq" aria-label="Поиск"><svg class="ic"><use href="#sheetmag"/></svg></button><button><svg class="ic s20"><use href="#bulb"/></svg>План лечения</button><button><svg class="ic s20"><use href="#bulb"/></svg>План лечения_ДИМА</button><button>ТЕСТ</button><button>ТЕСТ_РАСП</button><button class="on"><svg class="ic s20"><use href="#bulb"/></svg>Назначения</button><button class="blk">лн_вопросы</button></footer>
</body>
</html>
```
FILE: styles.css
```css
*{box-sizing:border-box}
body{margin:0;height:100vh;display:flex;flex-direction:column;background:#f0f0f0;font:11px/14px "Liberation Sans",Arial,sans-serif;color:#000;overflow:hidden}
button,input,select,textarea{font:inherit;color:inherit;margin:0}
button{padding:0;border:0;background:none}
.sprite{position:absolute;width:0;height:0}
.ic{width:24px;height:24px;flex:none;display:block}
.s16{width:16px;height:16px}
.s20{width:20px;height:20px}
.grow{flex:1}

.title{flex:none;height:22px;display:flex;align-items:center;gap:5px;padding:0 2px 0 3px;border-top:1px solid #333a42;background:linear-gradient(#97b1cf,#b9d1ea);font:12px/16px Roboto,sans-serif;white-space:pre}
.title .s16{width:18px;height:18px}
.winbtns{margin-left:auto;display:flex;gap:3px}
.winbtns button{width:30px;height:16px;display:flex;align-items:center;justify-content:center;border:1px solid #54677e;border-radius:3px;background:linear-gradient(#c9daeb 50%,#a5bdd6 50%);color:#fff;font-size:11px;line-height:12px}
.winbtns .close{background:linear-gradient(#dc9a8c 50%,#bf3f2b 50%)}
.min{width:11px;height:5px;border:1px solid #445;background:#fff}
.max{width:9px;height:9px;border:2px solid #fff;outline:1px solid #445}

.menu{flex:none;height:20px;display:flex;gap:14px;padding:0 7px;background:linear-gradient(#fff 30%,#d5daef 50%,#dfe4f5);border-bottom:1px solid #b6bccc;font:12px/19px Roboto,sans-serif;overflow:hidden}
.menu a{color:#000;text-decoration:none;white-space:nowrap}

.bar{display:flex;align-items:center;flex:none;background:#f0f0f0}
.bar button{width:31px;height:28px;display:flex;align-items:center;justify-content:center;flex:none}
.bar button.on{width:34px;border:1px solid #555;border-radius:4px;background:#dcdcdc;padding:0 4px}
.main-bar{height:38px;padding-left:3px;border-top:1px solid #999;margin-bottom:1px;padding-right:5px}
.sep{width:8px;height:26px;flex:none;background:linear-gradient(#888,#888) center/1px 100% no-repeat}
.sep.wide{width:12px}
.dsep{width:8px;height:26px;flex:none;background:linear-gradient(90deg,#999 1px,#fff 1px 3px,#999 3px) center/4px 100% no-repeat}
.car{width:14px;flex:none;display:flex;justify-content:center}
.car::before{content:"";border:4px solid transparent;border-top:4px solid #222;border-bottom:0}
.car.off::before{border-top-color:#777}

.work{flex:1;min-height:0;display:grid;grid-template-columns:minmax(0,1160fr) minmax(0,758fr);gap:2px}
.left{display:flex;flex-direction:column;min-height:0;padding:0 0 2px;border:1px solid #999;border-bottom:0;background:#f0f0f0}
.cap{flex:none;margin:0;height:26px;display:flex;align-items:center;padding-left:9px;background:linear-gradient(#2e93f5,#0c2f5e);color:#fff;font:bold 13px/16px "Liberation Sans",Arial,sans-serif;white-space:nowrap}
.cap span{flex:1;padding-right:29px;text-align:center}
.scroll{flex:1;min-height:0;display:flex}
.view{flex:1;min-width:0;display:flex;flex-direction:column;background:#d4d4d4;overflow:hidden}

.tabs{display:flex;align-items:flex-end;flex:none;white-space:nowrap}
.tabs button{display:flex;align-items:center;justify-content:center;gap:5px;height:19px;border:1px solid #888a94;border-bottom:0;border-left-color:#fff;background:linear-gradient(#f3f3f3,#dcdcdc)}
.tabs .act{background:#fff;align-self:stretch;height:auto;border-left-color:#888a94}
.ltabs{height:21px;margin-top:1px}
.ltabs button{padding:0 4px}
.ltabs .act{padding:0 7px}

.cols{flex:1;min-height:0;display:flex}
.page{flex:1;min-width:0;display:flex;flex-direction:column;background:#f0f0f0;border-top:1px solid #888a94;border-right:1px solid #888a94;border-bottom:1px solid #888a94;padding:0 1px 2px 0;box-shadow:inset 0 2px #fff}
.vgroup{display:flex;flex:none}
.vtabs{width:22px;display:flex;flex-direction:column}
.vt{writing-mode:vertical-rl;transform:rotate(180deg);border:1px solid #fff;border-left:0;font-size:12px;display:flex;align-items:center;justify-content:center;width:20px;background:#f0f0f0}
.a{height:54px;border-top-color:#888}
.b{height:71px;border-top:2px solid #777}
.c{height:58px;border-top:2px solid #777}
.vpanel{flex:1;min-width:0;display:flex;flex-direction:column;border-left:1px solid #fff;border-top:1px solid #fff;border-right:2px solid #777;border-bottom:2px solid #777}
.g1{padding-top:3px}
.g1 .vpanel{height:259px;padding:4px 4px 2px 7px}
.drugs{display:flex;gap:1px;height:106px}
.vbar{width:33px;border:1px solid #999;border-bottom:0;display:flex;flex-direction:column;align-items:center;padding-top:4px;gap:6px}
.vbar hr{width:26px;margin:0;border:0;border-top:1px solid #999}
.gridbox{flex:1;min-width:0;border:1px solid #999;background:#fff;display:flex;align-items:stretch;position:relative;overflow:hidden}
.lab{margin:61px 0 0;line-height:16px}
.memo{height:37px;flex:none;border:1px solid #aaa;background:#fff;resize:none;margin-right:3px;border-radius:2px}
.addrow{display:flex;justify-content:space-between;align-items:center;height:35px}
.add{width:193px;height:26px;border:1px solid #aaa;border-radius:3px;background:#f4f4f4;color:#969696;font-size:12px;padding-right:30px}
fieldset{display:flex;align-items:center;justify-content:space-between;width:286px;height:33px;margin:0;padding:10px 10px 0 8px;border:1px solid #cfdbe6;border-radius:3px}
fieldset label{display:flex;align-items:center;gap:3px}
[type=radio]{appearance:none;width:13px;height:13px;border:1px solid #777;border-radius:50%;background:radial-gradient(circle,#ccc,#fff)}
[type=radio]:checked{background:radial-gradient(circle,#3aa0dc 0 1px,#123a60 4px,#fff 5px)}

.bx{height:33px;border-top:1px solid #999;border-bottom:1px solid #999}
.filter{flex:none;display:flex;height:45px;padding:2px 4px 0;gap:5px}
.filter label{display:block;color:#000080;line-height:15px;padding-left:2px}
.fc div{position:relative;display:flex;gap:5px;margin-top:1px}
.fc div::after{content:"";position:absolute;left:87px;top:9px;border:4px solid transparent;border-top:5px solid #000;border-bottom:0}
select{appearance:none;width:100px;height:22px;padding:0 4px;border:1px solid #707070;border-radius:3px;background:linear-gradient(#f2f2f2 50%,#d8d8d8 50%)}
.filter input{width:106px;height:22px;border:1px solid #dfe3ec;border-top-color:#aaa;background:#fff;border-radius:2px}
.clr{margin:17px 0 0 4px;height:22px}

.grid{table-layout:fixed;border-collapse:separate;border-spacing:0;flex:none;align-self:flex-start}
.grid th,.grid td{height:19px;padding:0 3px;overflow:hidden;white-space:nowrap;line-height:18px;text-align:left}
.grid th{position:relative;font-weight:normal;background:#f0f0f0;border-right:1px solid #000;border-bottom:1px solid #000;box-shadow:inset -1px -1px #aaa}
.grid td{border-right:1px solid #c0c0c0;border-bottom:1px solid #c0c0c0;background:#fff}
.grid .r{text-align:right}
.grid td.ind{background:#f0f0f0;border-right-color:#000;border-bottom-color:#000;box-shadow:inset -1px -1px #aaa;padding:0}
.cur::before{content:"";display:block;width:0;margin-left:3px;border:6px solid transparent;border-left:6px solid #000;border-right:0}
.grid td.grp{background:#4d6c9a;color:#fff;font-weight:bold;padding-left:22px}
.grid td.sel,.grid .selrow td:not(.ind){background:#b0bff0}
.grid td.crm{background:#fffcf0}
.grid td.foc{background:#3399ff;outline:1px dotted #a50;outline-offset:-2px}
.grid .grn td:not(.ind):not(.pl){background:#dcfcd5}
.flt{position:absolute;right:4px;top:5px;width:0;height:0;border:5px solid transparent;border-top:7px solid #888;border-bottom:0}
.flt::after{content:"";position:absolute;left:-3px;top:-6px;border:3px solid transparent;border-top:5px solid #f0f0f0;border-bottom:0}
.mk{appearance:none;display:block;width:8px;height:6px;margin:0 auto;border:1px solid #888;border-right-color:#fff;border-bottom-color:#fff}
.grid td:has(.mk){padding:0}
.cb{appearance:none;display:block;width:12px;height:12px;margin-left:-1px;border:2px solid #222;border-right:1px solid #c0c0c0;border-bottom:1px solid #c0c0c0}
.pl i{display:block;margin-left:4px;width:0;border:4px solid transparent;border-left:5px solid #2a8a12;border-right:0}
.grid td.inf{padding:0 2px}
.grid td.cnt{padding:0;font-family:"Liberation Serif",serif;font-size:12px;line-height:14px;vertical-align:top}
.cnt b{display:inline-block;width:25px;text-align:center;color:#080}
.cnt b+b{color:#f00}
.cnt b+b+b{color:#000}
.w12{width:12px}.w16{width:16px}.w20{width:20px}.w40{width:40px}.w65{width:65px}.w69{width:70px}.w77{width:77px}.w92{width:92px}.w124{width:124px}.w127{width:127px}.w166{width:166px}.w181{width:181px}.w201{width:201px}.w217{width:217px}.w320{width:320px}.w427{width:427px}.w490{width:490px}
.t1{width:780px}
.grid.t1 th,.grid.t3 th{text-align:center}
.t1 th{font-size:12px}
.t1 .sort{padding-right:12px}
.t2{width:1045px}
.t2 th{font-weight:bold}
.t3{width:1040px}
.grid.t3 th{padding:0;line-height:15px;vertical-align:top}
.t3 th.l span{display:block;width:52px;overflow:hidden}
.t4{width:100%}
.gcell{flex:1;min-width:0;overflow:hidden;padding:1px 0 0 1px}
.g2{flex:1;min-height:0}

.g3{padding-top:6px}
.g3 .vpanel{height:190px;padding:4px 3px 3px 1px}
.rbar{height:33px;border-top:1px solid #999}
.rbar .stampb{border-left:1px solid #999;height:32px;width:32px}
.g4{flex:1}
.status{height:21px;display:flex;background:#f1edec;padding-top:2px;position:relative}
.status span{width:140px;display:flex;justify-content:space-between;border-right:1px solid #ccc;padding:2px 1px 0 6px}
.status span:first-child{width:114px;padding-left:8px}
em{font-style:normal}

.side{width:48px;padding:60px 0 0 18px;overflow:hidden;flex:none;display:flex;flex-direction:column;align-items:flex-start;white-space:nowrap;font-size:12px;line-height:16px;color:#000080;margin-top:22px}
.side input{width:80px;height:23px;flex:none;border:1px solid #a8cde8;border-top-color:#3b7db8;background:#fff}
.side button{width:80px;flex:none;border:1px solid #777;border-radius:3px;background:linear-gradient(#f4f4f4 45%,#d4d4d4 50%);padding-left:14px}
.x1{height:30px}
.side .x1{margin:12px 0 10px}
.x2{height:39px}
.x3{height:39px}
.side .x3{margin:13px 0 6px;padding-left:22px}
.side .x4{height:39px;margin-top:14px;padding-left:6px}

.acts{flex:none;display:flex;align-items:flex-end;gap:22px;height:37px}
.acts button{display:flex;align-items:center;justify-content:center;gap:7px;height:24px;border:1px solid #707070;border-radius:3px;background:linear-gradient(#f2f2f2 50%,#d6d6d6 50%);font:bold 12px/16px "Liberation Sans",Arial,sans-serif}
.acts .b1{width:359px;border-left:0}
.acts .b2{width:382px;height:28px}
.note{flex:none;margin-top:4px;width:1003px;max-width:90%;height:48px;display:flex;background:#fff;border-top:1px solid #999;overflow:hidden;font-size:12px;line-height:15px}
.note p{flex:1;margin:0;padding:3px 20px 0 6px}

.vsb{width:16px;flex:none;display:flex;flex-direction:column;background:#eee}
.hsb{height:17px;flex:none;display:flex;background:#eee}
.up,.dn,.lf,.rt{flex:none;width:17px;height:17px;display:flex;align-items:center;justify-content:center}
.up::before{content:"";border:4px solid transparent;border-bottom:4px solid #333;border-top:0}
.dn::before{content:"";border:4px solid transparent;border-top:4px solid #333;border-bottom:0}
.lf::before{content:"";border:4px solid transparent;border-right:4px solid #333;border-left:0}
.rt::before{content:"";border:4px solid transparent;border-left:4px solid #333;border-right:0}
.rest{flex:1}
.th{flex:none;border:1px solid #999;border-radius:2px;background:linear-gradient(90deg,#f6f6f6,#ccc)}
.t16{height:16px}
.t20{height:20px}
.gap6{height:6px}
.grip{display:flex;align-items:center;justify-content:center}
.grip::before{content:"";width:7px;height:7px;background:repeating-linear-gradient(#666 0 1px,transparent 1px 3px)}
.big .th{height:75%}
.hsb .th{width:83%;background:linear-gradient(#f6f6f6 40%,#d0d0d0 50%)}
.left>.hsb{padding-right:16px}
.left>.hsb .th{display:flex;align-items:center;justify-content:center}
.left>.hsb .th::before{content:"";width:8px;height:7px;background:repeating-linear-gradient(90deg,#777 0 1px,transparent 1px 3px)}

.right{position:relative;display:flex;flex-direction:column;min-height:0;border-left:1px solid #999;border-top:1px solid #999;border-bottom:1px solid #999;padding:0 3px 1px}
.rtabs{height:20px;font-weight:bold}
.rtabs button{height:18px;padding:0 5px 0 3px;overflow:hidden}
.rtabs .act{padding:0 5px}
.frame{flex:1;min-height:0;display:flex;flex-direction:column;border:1px solid #888a94;background:#fff;padding:3px}
.frame.in{background:#f0f0f0;padding:3px 2px 1px}
.stabs{height:20px}
.stabs button{height:18px;padding:0 4px}
.stabs .act{padding:0 7px}
.dbar{height:33px;border:1px solid #aaa}
.bar .mkb{font-weight:bold}
.right .filter{padding-left:3px}
.g5 .gcell{display:flex;flex-direction:column}
.g5 .hsb{margin-top:auto}
.g5 .hsb .th{width:15px}
.th.full{flex:1}
.blank{position:absolute;left:256px;right:0;top:149px;bottom:0;background:#fff}
.foot{flex:none;height:22px;display:flex;align-items:center;gap:4px;padding-left:3px}
.foot>button{height:21px;width:118px;border:1px solid #707070;border-radius:3px;background:linear-gradient(#f2f2f2 50%,#d6d6d6 50%)}
.foot .status{flex:1;overflow:hidden}
.red{color:#f00}
.mask{position:absolute;left:17px;right:0;top:0;height:14px;background:#f0f0f0}
.voice{position:absolute;left:581px;top:18px;width:126px;height:51px;border:1px solid #555;background:#f0f0f0;font:12px/19px "Open Sans",sans-serif}
.voice div{display:flex;align-items:center;justify-content:space-between;height:20px;padding:0 4px 0 3px;background:linear-gradient(#bccbdc,#dce6f0);color:#444}
.voice button{width:12px;height:12px;border:1px solid #667;border-radius:2px;font-size:9px;line-height:9px}

.task{flex:none;height:34px;display:flex;align-items:center;gap:4px;padding:0 6px;border-bottom:1px solid #999}
.task button{width:148px;height:23px;display:flex;align-items:center;justify-content:center;border:1px solid #707070;border-radius:3px;background:linear-gradient(#f2f2f2 50%,#d8d8d8 50%);font-size:13px;color:#0000e0;white-space:nowrap;overflow:hidden}
.task .sq{width:31px;height:28px;margin-right:3px}
.task .on{background:linear-gradient(#d6eefb 50%,#74b8dd 50%);border-color:#2c628b}
.task .blk{color:#000}
```
